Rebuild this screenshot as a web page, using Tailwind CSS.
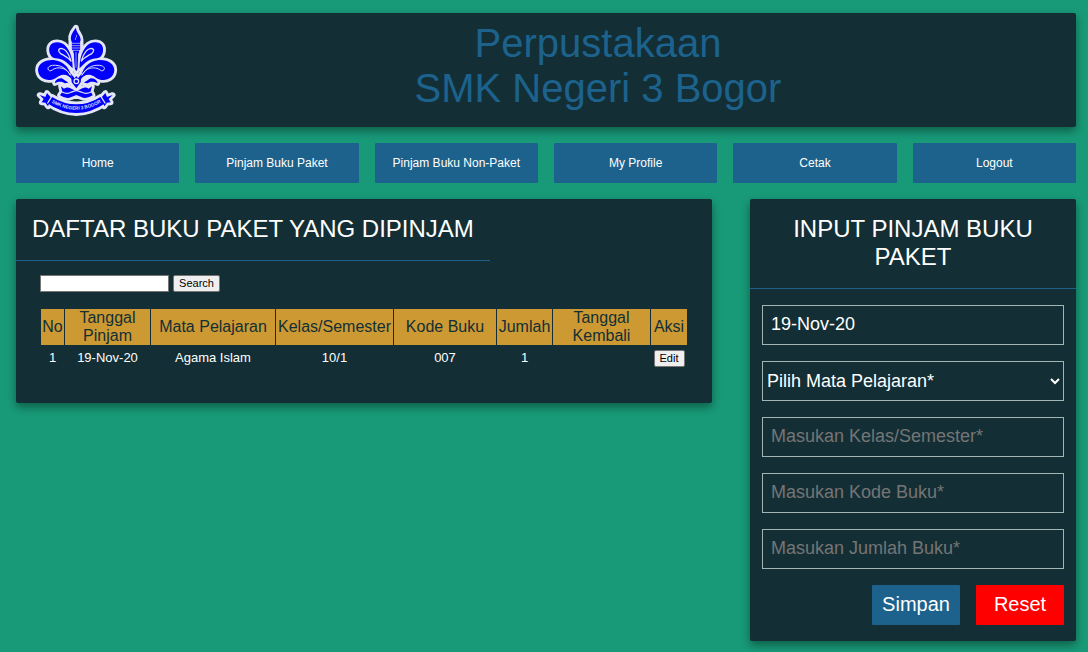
<!DOCTYPE html>
<html lang="id">
<head>
<meta charset="utf-8">
<meta name="viewport" content="width=device-width, initial-scale=1">
<title>Perpustakaan SMK Negeri 3 Bogor</title>
<script src="https://cdn.jsdelivr.net/npm/@tailwindcss/browser@4"></script>
</head>
<body class="min-h-screen bg-[#189a78] pt-[13px] pr-3 pb-[11px] pl-4 font-['Liberation_Sans',Arial,sans-serif] text-white">
  <header class="flex h-[114px] items-start rounded-xs bg-[#132f35] shadow-[0_4px_10px_rgba(0,0,0,0.4)]">
    <svg class="mt-[7px] ml-[14px] h-[100px] w-[90px] shrink-0" viewBox="30 15 270 300" role="img" aria-label="Logo SMK Negeri 3 Bogor">
      <defs>
        <filter id="glow" x="-10%" y="-10%" width="120%" height="120%"><feGaussianBlur stdDeviation="2"/></filter>
        <g id="petals">
          <path d="M158 160C159 128 145 82 112 82C92 82 84 96 89 114C92 123 98 129 106 130C126 131 140 140 158 160Z"/>
          <path d="M156 194C152 164 134 137 100 135C71 134 54 147 54 166C56 189 76 198 96 194C108 191 114 181 130 179C142 179 148 184 156 194Z"/>
          <path d="M105 200C111 191 120 188 128 191C134 195 138 198 145 203L135 205C126 198 117 199 105 204Z"/>
        </g>
        <path id="ribbon" d="M59 240L76 246L81 234L94 249L84 274L76 263L65 262L71 252Z"/>
        <path id="banner" d="M95 245Q169 291 243 245L258 263Q169 325 80 263Z"/>
        <path id="emblem-base" d="M123 214L132 221Q142 215 151 220L169 229L187 220Q197 215 206 221L216 214L212 229L218 241Q198 254 184 246L169 240L154 246Q140 254 120 241L127 230Z"/>
        <path id="flame" d="M168 38C168 53 182 59 182 75L179 84L157 84C149 70 152 57 168 38Z"/>
        <path id="torch" d="M154 83H182V102L177 108L174 158L169 169L163 158L160 108L154 102Z"/>
        <path id="point" d="M153 176L164 190L169 183L174 190L185 176L182 202L169 220L155 202Z"/>
        <g id="emblem">
          <use href="#petals"/>
          <use href="#petals" transform="translate(337 0) scale(-1 1)"/>
          <use href="#flame"/><use href="#torch"/><use href="#point"/>
          <use href="#emblem-base"/><use href="#banner"/><use href="#ribbon"/>
          <use href="#ribbon" transform="translate(337 0) scale(-1 1)"/>
        </g>
        <path id="text-line" d="M86 257Q169 311 252 257"/>
      </defs>
      <use href="#emblem" fill="#e4e6f6" stroke="#e4e6f6" stroke-width="17" stroke-linejoin="round" filter="url(#glow)"/>
      <use href="#emblem" fill="#0000fb"/>
      <g fill="none" stroke="#dfe1f8" stroke-width="4" stroke-linecap="round">
        <g id="veins">
          <path d="M153 138C147 116 139 102 124 100C113 101 115 110 121 115C130 121 143 126 153 138"/>
          <path d="M151 180C139 159 121 149 98 151C84 153 80 161 88 167C94 170 98 161 110 159C130 157 141 164 151 180" stroke-width="3"/>
        </g>
        <use href="#veins" transform="translate(337 0) scale(-1 1)"/>
        <path d="M166 74C164 69 171 68 170 61M156 85H180M156 92H180M157 99H179M158 106H178" stroke-width="2"/>
        <path d="M154 84V108L160 116L163 168M182 84V108L176 116L174 168" stroke-width="3"/>
        <path d="M168 112V157" stroke-width="2"/>
        <circle cx="169" cy="199" r="7"/>
        <path d="M126 231Q142 239 154 231L169 226L184 231Q198 239 213 231"/>
        <path d="M95 245L83 264M243 245L255 264"/>
      </g>
      <text fill="#dfe1f8" class="text-[14px] font-bold"><textPath href="#text-line" startOffset="50%" text-anchor="middle">SMK NEGERI 3 BOGOR</textPath></text>
    </svg>
    <h1 class="flex-1 pt-2 text-center text-[40px] leading-[45px] text-[#1c628c]">Perpustakaan<br>SMK Negeri 3 Bogor</h1>
  </header>

  <nav class="mt-4 grid grid-cols-6 gap-4 text-center text-xs leading-10" aria-label="Menu utama">
    <a href="#" class="rounded-[1px] bg-[#1c628c]">Home</a>
    <a href="#" class="rounded-[1px] bg-[#1c628c]">Pinjam Buku Paket</a>
    <a href="#" class="rounded-[1px] bg-[#1c628c]">Pinjam Buku Non-Paket</a>
    <a href="#" class="rounded-[1px] bg-[#1c628c]">My Profile</a>
    <a href="#" class="rounded-[1px] bg-[#1c628c]">Cetak</a>
    <a href="#" class="rounded-[1px] bg-[#1c628c]">Logout</a>
  </nav>

  <main class="mt-4 grid grid-cols-[64fr_30fr] items-start gap-[38px]">
    <section class="rounded-xs bg-[#132f35] pb-8 shadow-[0_4px_10px_rgba(0,0,0,0.4)]">
      <h2 class="w-fit border-b border-[#1c628c] px-4 pt-4 pb-[17px] text-2xl leading-7">DAFTAR BUKU PAKET YANG DIPINJAM</h2>
      <form class="flex gap-1 px-6 pt-[14px]">
        <input type="text" aria-label="Cari buku" class="h-[17px] w-[129px] border border-[#767676] bg-white px-px text-[11px] text-black">
        <button type="button" class="h-[17px] w-[47px] rounded-xs border border-[#767676] bg-[#efefef] text-[11px] leading-[15px] text-black">Search</button>
      </form>
      <div class="px-6 pt-4">
        <table class="w-full table-fixed border-separate border-spacing-px text-center">
          <colgroup>
            <col class="w-[23px]"><col class="w-[85px]"><col class="w-[124px]"><col class="w-[117px]"><col class="w-[102px]"><col class="w-[55px]"><col class="w-[97px]"><col class="w-[36px]">
          </colgroup>
          <thead class="bg-[#cc9933] text-base leading-[18px] text-[#132f35]">
            <tr>
              <th class="p-0 font-normal">No</th>
              <th class="p-0 font-normal">Tanggal<br>Pinjam</th>
              <th class="p-0 font-normal">Mata Pelajaran</th>
              <th class="p-0 font-normal">Kelas/Semester</th>
              <th class="p-0 font-normal">Kode Buku</th>
              <th class="p-0 font-normal">Jumlah</th>
              <th class="p-0 font-normal">Tanggal<br>Kembali</th>
              <th class="p-0 font-normal">Aksi</th>
            </tr>
          </thead>
          <tbody class="text-[13px] leading-4">
            <tr class="h-6">
              <td class="p-0">1</td>
              <td class="p-0">19-Nov-20</td>
              <td class="p-0">Agama Islam</td>
              <td class="p-0">10/1</td>
              <td class="p-0">007</td>
              <td class="p-0">1</td>
              <td class="p-0"></td>
              <td class="p-0"><button type="button" class="mx-auto block h-[17px] w-[31px] rounded-xs border border-[#767676] bg-[#efefef] text-[11px] leading-[15px] text-black">Edit</button></td>
            </tr>
          </tbody>
        </table>
      </div>
    </section>

    <section class="rounded-xs bg-[#132f35] shadow-[0_4px_10px_rgba(0,0,0,0.4)]">
      <h2 class="border-b border-[#1c628c] px-4 pt-4 pb-[17px] text-center text-2xl leading-7">INPUT PINJAM BUKU PAKET</h2>
      <form class="flex flex-col gap-4 px-3 py-4 text-lg">
        <input type="text" aria-label="Tanggal pinjam" value="19-Nov-20" class="h-10 w-full border border-[#a3b5b0] px-2 pb-[2px]">
        <select aria-label="Mata pelajaran" class="h-10 w-full border border-[#a3b5b0] bg-[#132f35] text-white">
          <option>Pilih Mata Pelajaran*</option>
        </select>
        <input type="text" aria-label="Kelas/Semester" placeholder="Masukan Kelas/Semester*" class="h-10 w-full border border-[#a3b5b0] px-2 pb-[2px] placeholder:text-[#757575]">
        <input type="text" aria-label="Kode buku" placeholder="Masukan Kode Buku*" class="h-10 w-full border border-[#a3b5b0] px-2 pb-[2px] placeholder:text-[#757575]">
        <input type="text" aria-label="Jumlah buku" placeholder="Masukan Jumlah Buku*" class="h-10 w-full border border-[#a3b5b0] px-2 pb-[2px] placeholder:text-[#757575]">
        <div class="flex justify-end gap-4 text-xl">
          <button type="button" class="h-10 w-[88px] rounded-[1px] bg-[#1c628c] pb-[2px]">Simpan</button>
          <button type="reset" class="h-10 w-[88px] rounded-[1px] bg-[#ff0000] pb-[2px]">Reset</button>
        </div>
      </form>
    </section>
  </main>
</body>
</html>
